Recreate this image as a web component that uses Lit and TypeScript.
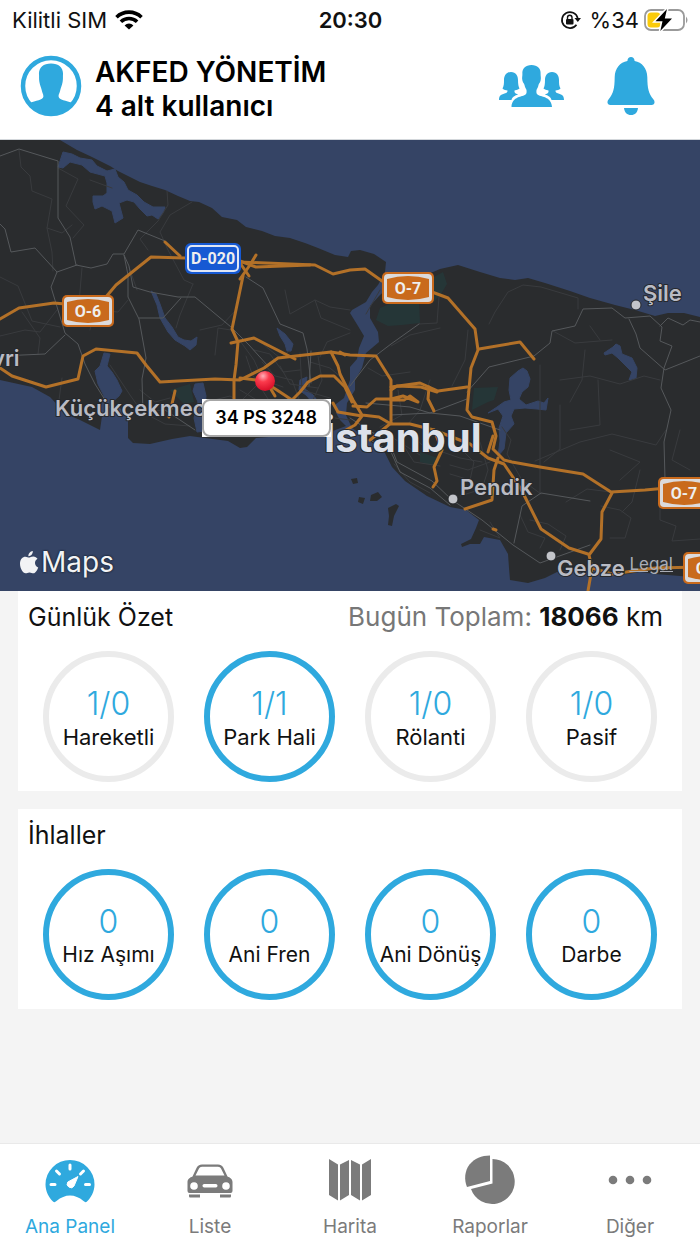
import { LitElement, html, css, svg } from "lit";
import { customElement, property } from "lit/decorators.js";

interface Stat {
  value: string;
  label: string;
  active: boolean;
}

const DAILY: Stat[] = [
  { value: "1/0", label: "Hareketli", active: false },
  { value: "1/1", label: "Park Hali", active: true },
  { value: "1/0", label: "Rölanti", active: false },
  { value: "1/0", label: "Pasif", active: false },
];

const VIOLATIONS: Stat[] = [
  { value: "0", label: "Hız Aşımı", active: true },
  { value: "0", label: "Ani Fren", active: true },
  { value: "0", label: "Ani Dönüş", active: true },
  { value: "0", label: "Darbe", active: true },
];

const EUROPE =
  "M0 0H60L77 10L92 17L110 26L118 31L140 42L152 46L165 50L178 56L190 61L199 62L212 68L222 77L237 80L246 87L262 91L275 96L290 98L305 103L318 108L335 115L348 117L351 111L360 110L374 114L386 122L385 132L378 145L372 152L366 162L352 170L350 173L358 186L364 196L359 208L357 219L350 227L350 240L344 258L336 264L336 273L340 280L346 286L330 292L256 298L247 307L240 308L228 301L205 298L190 296L172 299L150 304L133 303L128 298L128 276L118 266L110 270L102 276L100 290L80 280L66 274L50 257L32 247L0 240Z";
const ASIA =
  "M400 138L416 135L433 132L440 129L458 125L480 132L500 138L515 140L528 138L545 143L570 151L590 158L615 165L635 170L655 176L668 173L684 173L700 177V438L680 436L655 434L640 432L615 436L590 430L574 431L557 432L545 438L528 443L510 440L509 428L508 414L500 400L484 397L480 404L470 404L462 407L461 404L471 399L476 388L479 380L466 370L450 367L427 356L405 341L392 327L385 313L377 307L365 297L352 288L346 275L347 263L355 250L355 240L362 228L366 213L379 202L378 192L370 178L370 166L380 155L388 148Z";

const LAKES = [
  "M63 12L72 14L80 18L92 20L97 26L107 31L115 29L118 37L124 42L128 50L137 55L144 62L153 67L165 67L163 73L158 79L152 75L147 76L140 69L134 62L127 60L119 63L123 78L115 83L112 71L102 66L95 69L93 62L93 56L103 56L107 53L107 43L105 36L90 32L82 25L70 22L63 28L58 27Z",
  "M151 151L156 154L160 164L165 178L172 187L178 197L184 200L191 201L197 197L196 205L190 210L185 206L175 200L168 192L160 178L157 165Z",
  "M277 188L285 194L293 204L291 211L287 211L285 204L280 196Z",
  "M104 213L110 214L107 226L112 232L117 240L122 251L119 256L112 262L110 272L103 278L101 268L104 256L98 244L95 231L100 226Z",
  "M195 244L203 243L206 256L204 275L205 291L197 292L194 278L198 262L193 251Z",
  "M300 240L307 237L305 249L313 255L320 264L314 264L306 255L299 250Z",
  "M604 213L613 207L616 204L620 206L622 214L632 218L637 228L636 238L629 240L632 232L625 225L618 218L612 213L605 215Z",
  "M518 231L523 228L527 231L530 239L528 247L522 252L519 259L526 265L538 261L544 263L548 258L546 270L537 269L525 268L514 269L511 276L514 284L506 293L504 309L498 316L500 301L499 288L503 276L498 269L488 273L497 267L504 262L511 260L509 250L510 238Z",
];

const ISLES = [
  "M351 339L357 338L358 343L353 344Z",
  "M359 357L365 358L363 364L358 362Z",
  "M371 355L378 352L382 357L377 361L370 361Z",
  "M388 368L396 364L399 366L394 376L392 386L388 385L389 376Z",
];

const PARKS = [
  "M380 168L392 163L419 160L420 183L402 185L388 186L376 180Z",
  "M434 137L443 132L447 144L441 154L434 162Z",
  "M474 248L498 247L494 260L488 262L472 270Z",
  "M420 312L438 318L434 326L420 322Z",
  "M170 250L190 244L194 262L184 264Z",
];

const HIGHWAYS = [
  "0,179 19,168 54,163 65,164 100,164 116,145 151,117 185,118 240,122 315,125 333,134 350,130 365,129 382,141 432,152 448,158 475,189 478,210 471,228 467,270 472,277 492,282 496,296 493,309 504,320 512,322 540,327 583,334 611,352 645,350 700,345",
  "165,102 180,116",
  "240,121 256,127 310,125",
  "240,139 250,125 256,115",
  "240,123 249,136",
  "243,136 232,189 238,202 236,225 234,240 234,260",
  "231,203 254,198 295,219",
  "0,228 12,236 46,247 78,239 83,216 96,209 137,213 146,225 160,242 215,239 240,240 264,228 278,218 331,212 350,215 376,216 391,240 391,283",
  "331,212 338,226 340,234 353,260 362,275 379,277 391,284 410,284 434,290 470,304 488,318 504,324 521,349 541,389 569,408 588,414",
  "240,238 256,240 266,243 280,252 292,260 300,252 308,242 320,236 334,236 345,247 352,262",
  "269,246 275,256",
  "391,247 420,243 438,251 467,247",
  "391,250 397,246 421,247 437,252",
  "429,247 428,259 434,271",
  "353,266 367,267 376,259 391,259 403,256 418,262 410,256 404,260 391,260",
  "333,263 338,272 362,276 355,285 346,290",
  "391,283 380,292 370,300",
  "434,290 442,310 434,327 437,341 433,347",
  "498,318 494,330 492,360 465,369",
  "493,296 488,312",
  "479,209 520,202 534,219",
  "612,353 602,372 601,399 589,415 592,428 588,451",
  "592,428 612,434 655,428 700,427",
  "175,251 172,264 169,277",
  "340,212 345,215",
  "493,389 496,390",
];

const ROADS = [
  "0,16 19,9 58,21 58,78 70,97 76,125 91,128 107,124 113,114 124,114 138,90 165,101",
  "0,84 5,89 11,112 35,108 57,132 51,147 58,170 65,193 78,204 85,224 95,244 112,271",
  "57,132 77,125",
  "124,115 129,126 133,147 150,152 178,157 195,157 231,187 249,205 268,226",
  "124,115 128,135 128,157 139,179 146,218 142,239 143,272",
  "246,137 263,148 280,184 303,193 307,209 311,243",
  "139,178 163,178 181,158",
  "65,195 45,214 0,216",
  "350,246 370,220 391,204 419,184",
  "467,252 489,227 534,216 550,203 552,191 575,186 583,169 612,168 625,178 650,176 662,187 660,201 672,206 664,228 661,248 671,270 664,302 665,339",
  "629,179 636,194 640,208 665,230 700,216",
  "660,186 668,178 683,185 690,180 700,182",
  "366,263 410,267 430,273 467,259",
  "391,275 430,273 460,276 500,290",
  "350,278 364,287 390,304 397,322 432,341 452,360 482,380 513,405 540,423 590,405",
  "372,301 391,312 400,332 430,348 450,365",
  "514,403 522,366 541,353 590,361",
  "165,270 195,290",
  "311,211 309,246",
];

const STREETS = [
  "19,10 21,27 30,36 32,51 52,59 47,88 62,93 72,85",
  "58,28 78,39 66,66 84,85 73,98",
  "129,127 137,150",
  "167,51 168,65 158,81 140,99 148,110",
  "47,88 52,112 53,131",
  "57,170 40,192 25,190 0,196",
  "192,62 170,75 160,92 168,110 184,140 193,144",
  "193,144 180,175 176,188",
  "285,150 290,174 315,160 330,167 350,170",
  "315,160 321,178 350,190",
  "232,190 254,220 263,240 283,247",
  "350,193 327,202 320,217",
  "419,184 437,183 439,157",
  "489,184 495,172 508,152 523,145 541,147 578,158 578,169",
  "553,191 575,203 612,200",
  "394,324 410,342 430,353",
  "540,225 540,354",
  "502,287 511,300 507,314 522,340 541,354",
  "535,321 580,302 612,294 656,305 666,290",
  "480,302 488,330 482,349 460,356",
  "660,350 660,380 676,386 672,401 700,399",
  "601,366 620,370 631,378 625,398 610,398",
  "611,352 587,349 566,362",
  "430,240 420,270 408,284",
  "560,265 560,309 544,322",
  "585,210 582,240 570,262",
  "600,200 590,186",
  "440,188 410,195 391,206",
  "468,190 465,220 452,246",
  "0,137 18,146 32,181 60,187",
  "82,128 79,163",
  "110,225 130,255 142,272 165,270",
  "62,238 59,260",
  "215,215 218,188 231,190",
  "300,213 302,250 330,258",
  "258,200 280,218 289,211",
  "270,230 262,240 240,262",
  "335,278 350,280",
  "254,210 270,214 283,232 300,230",
  "262,222 275,236 292,240 300,262",
  "280,226 290,244 318,248",
  "310,222 330,228 342,238",
  "318,216 322,240 312,262",
  "240,250 260,262 290,266 330,268",
  "246,216 252,234 270,262",
  "206,262 230,256 250,268",
  "368,228 382,236 410,232",
  "398,250 402,275 380,287",
  "410,292 422,305 460,318 482,322",
  "400,300 414,322 440,326",
  "462,310 474,322 470,340 450,334",
  "450,325 468,330 490,322",
  "520,375 528,392 545,398 540,408",
  "530,380 548,384 566,396 560,410",
  "480,390 500,398 490,382",
  "148,275 165,284 190,286",
  "140,250 155,262 170,258",
  "236,170 222,185 200,190",
  "380,150 366,174",
  "610,310 640,322 620,340",
  "560,240 590,236 620,244 644,236 660,240",
  "570,290 600,285 598,240",
  "680,290 672,320 690,330",
  "640,330 632,362 622,372",
  "90,40 112,48",
  "22,172 40,198 38,214",
  "90,190 95,170 118,172 128,160",
  "360,290 390,296 420,315",
];

const ring = (s: Stat) => html`
  <button class="ring ${s.active ? "on" : ""}" type="button">
    <span class="value">${s.value}</span>
    <span class="name">${s.label}</span>
  </button>
`;

const line = (points: string) => svg`<polyline points=${points} />`;
const shape = (d: string) => svg`<path d=${d} />`;

const motorway = (x: number, y: number, label: string) => svg`
  <g transform="translate(${x} ${y})">
    <rect width="52" height="32" rx="5" fill="#c96a1c" />
    <rect x="2" y="2" width="48" height="28" rx="4" fill="#dcdadb" />
    <path d="M5 7Q26 1 47 7V25Q26 31 5 25Z" fill="#c96a1c" />
    <text class="shield" x="26" y="22">${label}</text>
  </g>
`;

@customElement("istanbul-map")
export class IstanbulMap extends LitElement {
  static styles = css`
    :host {
      display: block;
      position: relative;
      aspect-ratio: 700 / 451;
      overflow: hidden;
      background: #354465;
      font-family: Inter, "Liberation Sans", sans-serif;
    }
    .canvas {
      display: block;
      width: 100%;
      height: 100%;
    }
    .land { fill: #2a2c2e; }
    .park { fill: #25393a; opacity: 0.8; }
    .lake { fill: #354465; stroke: #354465; stroke-width: 1; }
    .line { fill: none; stroke-linejoin: round; stroke-linecap: round; }
    .streets { stroke: #393b3e; stroke-width: 1; }
    .roads { stroke: #55585b; stroke-width: 1; }
    .highways { stroke: #b37128; stroke-width: 3; }
    text {
      font-family: Inter, "Liberation Sans", sans-serif;
      paint-order: stroke;
      stroke: #26282c;
      stroke-width: 2px;
      stroke-linejoin: round;
    }
    .town { font-size: 22px; font-weight: 600; fill: #b9bbc3; }
    .city { font-size: 40px; font-weight: 700; fill: #dde1ea; }
    .shield {
      font-family: "Liberation Sans Narrow", Roboto, sans-serif;
      font-size: 16px;
      font-weight: 700;
      fill: #eeeeee;
      stroke: none;
      text-anchor: middle;
    }
    .callout {
      position: absolute;
      left: 28.8%;
      top: 57.4%;
      width: 129px;
      height: 38px;
      padding: 0;
      border: 0;
      background: #ffffff;
    }
    .plate {
      display: flex;
      align-items: center;
      justify-content: center;
      box-sizing: border-box;
      height: 100%;
      border: 2px solid #a6a6a6;
      border-radius: 8px;
      color: #000000;
      font: 600 18px/20px Inter, "Liberation Sans", sans-serif;
    }
    .brand {
      position: absolute;
      left: 19px;
      bottom: 11px;
      display: flex;
      align-items: center;
      gap: 2px;
      color: #f2f3f5;
      font-size: 28px;
      line-height: 36px;
      text-shadow: 0 0 2px #16202e, 0 0 2px #16202e;
    }
    .legal {
      position: absolute;
      right: 27px;
      bottom: 16px;
      color: #a9acb5;
      font-size: 17px;
      line-height: 22px;
    }
  `;

  render() {
    return html`
      <svg class="canvas" viewBox="0 0 700 451" preserveAspectRatio="xMidYMid slice" role="img" aria-label="İstanbul">
        <defs>
          <radialGradient id="pin" cx="0.4" cy="0.25" r="0.75">
            <stop offset="0" stop-color="#ffb0b8" />
            <stop offset="0.4" stop-color="#fb3a4c" />
            <stop offset="1" stop-color="#d80e28" />
          </radialGradient>
        </defs>
        <g class="land">${shape(EUROPE)}${shape(ASIA)}${ISLES.map(shape)}</g>
        <g class="park">${PARKS.map(shape)}</g>
        <g class="lake">${LAKES.map(shape)}</g>
        <g class="line streets">${STREETS.map(line)}</g>
        <g class="line roads">${ROADS.map(line)}</g>
        <g class="line highways">${HIGHWAYS.map(line)}</g>
        ${motorway(62, 155, "O-6")} ${motorway(382, 132, "O-7")}
        ${motorway(658, 337, "O-7")} ${motorway(683, 412, "O-4")}
        <g transform="translate(185 103)">
          <rect width="56" height="31" rx="6" fill="#1659d3" />
          <rect x="3" y="3" width="50" height="25" rx="4" fill="#1659d3" stroke="#dfe6f5" stroke-width="2" />
          <text class="shield" x="28" y="21">D-020</text>
        </g>
        <text class="town" x="-8" y="226">vri</text>
        <text class="town" x="55" y="276">Küçükçekmece</text>
        <text class="town" x="643" y="161">Şile</text>
        <text class="town" x="460" y="355">Pendik</text>
        <text class="town" x="557" y="436">Gebze</text>
        <text class="city" x="324" y="312">İstanbul</text>
        <g fill="#c3c5ca" stroke="#26282c" stroke-width="1">
          <circle cx="636" cy="165" r="5" />
          <circle cx="453" cy="359" r="5" />
          <circle cx="551" cy="416" r="5" />
        </g>
        <circle cx="265" cy="241" r="10" fill="url(#pin)" />
      </svg>
      <button class="callout" type="button"><span class="plate">34 PS 3248</span></button>
      <div class="brand">
        <svg width="20" height="25" viewBox="0 0 20 25" fill="#f2f3f5" aria-hidden="true">
          <path d="M13.8 1C14 3.8 11.900 6.300 9.400 6.200C9.200 3.600 11.400 1.300 13.800 1ZM10 7.600C11 7.600 12.300 6.500 14.200 6.500C16.200 6.500 17.700 7.600 18.500 8.800C14.800 11 15.400 16 19.200 17.500C18.300 20 16.600 23.300 14.400 23.300C12.900 23.300 12.300 22.400 10.500 22.400C8.700 22.400 8 23.300 6.600 23.300C3.900 23.300 1 18.300 1 13.800C1 9.200 3.700 6.700 6.400 6.700C8 6.700 9.200 7.600 10 7.600Z" />
        </svg>
        <span>Maps</span>
      </div>
      <a class="legal" href="#legal">Legal</a>
    `;
  }
}

@customElement("stat-card")
export class StatCard extends LitElement {
  static styles = css`
    :host {
      display: block;
      padding: 8px 10px 9px;
      background: #ffffff;
      color: #111111;
      font-size: 21px;
    }
    .head {
      display: flex;
      justify-content: space-between;
      align-items: baseline;
      padding: 0 9px 0 0;
      height: 52px;
      line-height: 36px;
      font-size: 26px;
    }
    h2 {
      margin: 0;
      font-size: 25px;
      font-weight: 400;
    }
    .rings {
      display: grid;
      grid-template-columns: repeat(4, 1fr);
      justify-items: center;
    }
    .ring {
      display: flex;
      flex-direction: column;
      align-items: center;
      box-sizing: border-box;
      width: 131px;
      height: 131px;
      padding: 29px 0 0;
      border: 6px solid #ebebeb;
      border-radius: 50%;
      background: none;
      color: #111111;
      font: inherit;
      white-space: nowrap;
    }
    .on { border-color: #2fa9de; }
    .value {
      color: #2fa9de;
      font-size: 32px;
      font-weight: 300;
      line-height: 36px;
    }
    .name { line-height: 30px; }
  `;

  @property() heading = "";
  @property({ attribute: false }) stats: Stat[] = [];

  render() {
    return html`
      <div class="head"><h2>${this.heading}</h2><slot></slot></div>
      <div class="rings">${this.stats.map(ring)}</div>
    `;
  }
}

@customElement("app-root")
export class AppRoot extends LitElement {
  static styles = css`
    :host {
      display: flex;
      flex-direction: column;
      min-height: 100vh;
      background: #ffffff;
      color: #000000;
      font-family: Inter, "Liberation Sans", sans-serif;
    }
    .status {
      display: grid;
      grid-template-columns: 1fr auto 1fr;
      align-items: center;
      height: 40px;
      padding: 0 11px 0 12px;
      font-size: 22px;
      line-height: 26px;
      color: #111111;
    }
    .carrier, .power {
      display: flex;
      align-items: center;
      gap: 8px;
    }
    .power { justify-content: flex-end; }
    .charge {
      display: flex;
      align-items: center;
      gap: 5px;
    }
    .clock { font-weight: 600; }
    header {
      display: flex;
      align-items: center;
      box-sizing: border-box;
      height: 100px;
      padding: 0 45px 7px 20px;
      border-bottom: 1px solid #d3d7db;
    }
    .icon {
      display: flex;
      padding: 0;
      border: 0;
      background: none;
    }
    .account { flex: 1; padding: 6px 0 0 13px; }
    h1, .sub {
      margin: 0;
      font-size: 28px;
      font-weight: 600;
      line-height: 34px;
    }
    .actions {
      display: flex;
      align-items: center;
      gap: 42px;
    }
    main {
      flex: 1;
      display: flex;
      flex-direction: column;
      gap: 18px;
      padding: 0 18px 18px;
      background: #f4f4f4;
    }
    .daily { font-size: 22px; }
    .muted { color: #777777; }
    nav {
      display: grid;
      grid-template-columns: repeat(5, 1fr);
      box-sizing: border-box;
      height: 101px;
      padding: 10px 0 0;
      border-top: 1px solid #e9e9e9;
      background: #ffffff;
    }
    .tab {
      display: flex;
      flex-direction: column;
      align-items: center;
      gap: 7px;
      color: #7b7b7b;
      font-size: 19px;
      line-height: 24px;
      text-decoration: none;
    }
    .current { color: #2fa9de; }
  `;

  render() {
    return html`
      <div class="status">
        <div class="carrier">
          <span>Kilitli SIM</span>
          <svg width="28" height="20" viewBox="0 0 28 20" fill="none" stroke="#000" stroke-width="3.600" aria-hidden="true">
            <path d="M1.500 7.200A18 18 0 0 1 26.500 7.200" />
            <path d="M5.900 11.700A11.700 11.700 0 0 1 22.100 11.700" />
            <path d="M9.600 15.400A6.300 6.300 0 0 1 18.400 15.400L14 19.600Z" fill="#000" stroke="none" />
          </svg>
        </div>
        <span class="clock">20:30</span>
        <div class="power">
          <svg width="22" height="20" viewBox="0 0 22 20" fill="none" stroke="#111" stroke-width="1.700" aria-hidden="true">
            <path d="M16.500 14.700A8 8 0 1 1 17.700 8" />
            <path d="M14.500 8H21L17.800 12Z" fill="#111" stroke="none" />
            <rect x="6" y="9" width="7.500" height="5.500" rx="1" fill="#111" stroke="none" />
            <path d="M7.500 9V7.500A2.200 2.200 0 0 1 12 7.500V9" stroke-width="1.400" />
          </svg>
          <span class="charge">
            <span>%34</span>
            <svg width="45" height="24" viewBox="0 0 45 24" aria-hidden="true">
              <rect x="1" y="2" width="39" height="20" rx="6" fill="#fff" stroke="#9a9a9a" stroke-width="1.800" />
              <path d="M42 8.500Q45 12 42 15.500Z" fill="#9a9a9a" />
              <rect x="3.500" y="4.500" width="13" height="15" rx="3.500" fill="#fbcb0a" />
              <path d="M23 1L11.500 13.200H18.500L16.300 23L28 10.400H20.800Z" fill="#000" stroke="#fff" stroke-width="3" paint-order="stroke" />
            </svg>
          </span>
        </div>
      </div>

      <header>
        <button class="icon" type="button" aria-label="Profil">
          <svg width="62" height="62" viewBox="0 0 62 62">
            <circle cx="31" cy="31" r="28" fill="#fff" stroke="#2fa9de" stroke-width="4.500" />
            <path d="M31 8.500C39 8.500 43.500 13 43 19.500C42.800 22 43.200 24 42.600 27C42 30.500 41 32 40.300 35C39.500 38.500 38.600 39 38.600 41.500C39 45 46 45.500 53 48A28 28 0 0 1 9 48C16 45.500 23 45 23.400 41.500C23.400 39 22.500 38.500 21.700 35C21 32 20 30.500 19.400 27C18.800 24 19.200 22 19 19.500C18.500 13 23 8.500 31 8.500Z" fill="#2fa9de" />
          </svg>
        </button>
        <div class="account">
          <h1>AKFED YÖNETİM</h1>
          <p class="sub">4 alt kullanıcı</p>
        </div>
        <div class="actions">
          <button class="icon" type="button" aria-label="Kullanıcılar">
            <svg width="67" height="44" viewBox="0 0 67 44" fill="#2fa9de">
              <path d="M13 8C18 8 20 12 20 16C20 20 20.500 23 21.500 24.500C19.500 26 17 26 16.500 26.500V28C17 29.500 19 30 20 30.500C17 31.500 14 33 13.500 36H1C1 30.500 4 30.500 8 29C9.500 28.300 9.500 27.500 9.500 26.500C8 26 6 26 4.500 24.500C6 22 6 19 6 16C6 12 8 8 13 8Z" />
              <path d="M54 8C49 8 47 12 47 16C47 20 46.500 23 45.500 24.500C47.500 26 50 26 50.500 26.500V28C50 29.500 48 30 47 30.500C50 31.500 53 33 53.500 36H66C66 30.500 63 30.500 59 29C57.500 28.300 57.500 27.500 57.500 26.500C59 26 61 26 62.500 24.500C61 22 61 19 61 16C61 12 59 8 54 8Z" />
              <path d="M33.500 1C39.500 1 43 4.500 42.600 10C42.500 12 43.300 13.500 42.600 16.500C42 19 41 19 40.500 21C40 23.500 39 24.500 38.500 26C38.300 28 38.300 29.500 39.500 30.500C42 33 53.500 32 54 43H13.500C14 32 25 33 27.500 30.500C28.700 29.500 28.700 28 28.500 26C28 24.500 27 23.500 26.500 21C26 19 25 19 24.400 16.500C23.700 13.500 24.500 12 24.400 10C24 4.500 27.500 1 33.500 1Z" />
            </svg>
          </button>
          <button class="icon" type="button" aria-label="Bildirimler">
            <svg width="48" height="60" viewBox="0 0 48 60" fill="#2fa9de">
              <path d="M24 1C26 1 27.500 2.500 27.600 5C35 6.500 40 12 40.300 21C40.500 33 41.500 37 46.500 43.500C48.500 46 47.500 49 44.500 49H3.500C.5 49-.5 46 1.500 43.500C6.500 37 7.500 33 7.700 21C8 12 13 6.500 20.400 5C20.500 2.500 22 1 24 1Z" />
              <path d="M17 52H31C30.500 56.500 28 59 24 59C20 59 17.500 56.500 17 52Z" />
            </svg>
          </button>
        </div>
      </header>

      <istanbul-map></istanbul-map>

      <main>
        <stat-card class="daily" heading="Günlük Özet" .stats=${DAILY}>
          <span><span class="muted">Bugün Toplam:</span> <b>18066</b> km</span>
        </stat-card>
        <stat-card heading="İhlaller" .stats=${VIOLATIONS}></stat-card>
      </main>

      <nav>
        <a class="tab current" href="#panel">
          <svg width="52" height="54" viewBox="0 0 52 54" aria-hidden="true">
            <path d="M26 6A24.500 24.500 0 0 1 50.500 30.500C50.500 37.500 47 43.500 43 47.500Q41.500 49 39.500 47Q33 41.500 26 41.500Q19 41.500 12.500 47Q10.500 49 9 47.500C5 43.500 1.500 37.500 1.500 30.500A24.500 24.500 0 0 1 26 6Z" fill="#2fa9de" />
            <g stroke="#fff" stroke-width="3" stroke-linecap="round">
              <path d="M26 11V15M12.500 17L15.500 20M36.500 20L39.500 17M7 30.500H11M41.500 30.500H45.500" />
            </g>
            <path d="M34 22.500L30 32A3.600 3.600 0 1 1 23.800 28Z" fill="#fff" stroke="#fff" stroke-linejoin="round" />
          </svg>
          <span>Ana Panel</span>
        </a>
        <a class="tab" href="#liste">
          <svg width="52" height="54" viewBox="0 0 52 54" aria-hidden="true">
            <path d="M3.500 28C3.500 25 6 23.500 8.500 22.500L12.500 14Q14 10.500 18 10.500H34Q38 10.500 39.500 14L43.500 22.500C46 23.500 48.500 25 48.500 28V37Q48.500 39 46.500 39H5.500Q3.500 39 3.500 37ZM11.500 21.500H40.500L37 14.500Q36.300 12.700 34 12.700H18Q15.700 12.700 15 14.500Z" fill="#7b7b7b" fill-rule="evenodd" />
            <circle cx="10" cy="32" r="3.800" fill="#fff" /><circle cx="42" cy="32" r="3.800" fill="#fff" />
            <rect x="18.500" y="30" width="15" height="3.500" rx="1.700" fill="#fff" />
            <path d="M5 40.500H16V43.500H6Q5 43.500 5 42ZM36 40.500H47V42Q47 43.500 46 43.500H36Z" fill="#7b7b7b" />
          </svg>
          <span>Liste</span>
        </a>
        <a class="tab" href="#harita">
          <svg width="52" height="54" viewBox="0 0 52 54" fill="#7b7b7b" aria-hidden="true">
            <path d="M5 5L14 10.500V46.500L5 41ZM16 10.500L25 6V41L16 46.500ZM27 6L36 10.500V46.500L27 41ZM38 10.500L47 5V41L38 46.500Z" />
          </svg>
          <span>Harita</span>
        </a>
        <a class="tab" href="#raporlar">
          <svg width="52" height="54" viewBox="0 0 52 54" fill="#7b7b7b" aria-hidden="true">
            <path d="M26 1.500V27L3 33C0 26 .5 17 5.500 10.500C10.500 4.500 17.500 1.500 26 1.500Z" />
            <path d="M28.500 5A22.500 22.500 0 1 1 7 35L28.500 29.500Z" />
          </svg>
          <span>Raporlar</span>
        </a>
        <a class="tab" href="#diger">
          <svg width="52" height="54" viewBox="0 0 52 54" fill="#7b7b7b" aria-hidden="true">
            <circle cx="9" cy="26" r="4.300" /><circle cx="26" cy="26" r="4.300" /><circle cx="43" cy="26" r="4.300" />
          </svg>
          <span>Diğer</span>
        </a>
      </nav>
    `;
  }
}
